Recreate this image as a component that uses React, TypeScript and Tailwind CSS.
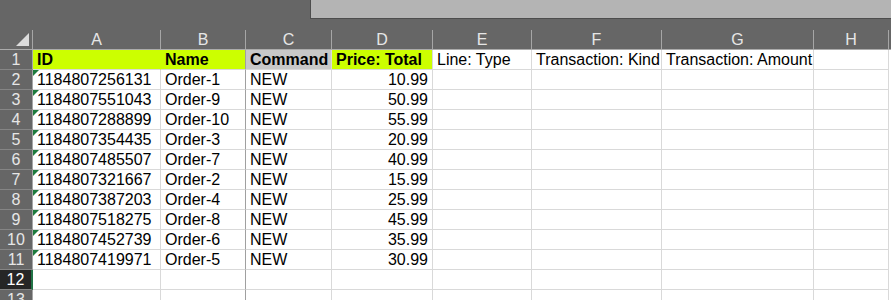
import React from "react";

const cols = [
    { key: "A", w: "w-[128px]" },
    { key: "B", w: "w-[85px]" },
    { key: "C", w: "w-[86px]" },
    { key: "D", w: "w-[101px]" },
    { key: "E", w: "w-[99px]" },
    { key: "F", w: "w-[130px]" },
    { key: "G", w: "w-[152px]" },
    { key: "H", w: "w-[75px]" },
];

const orders: [string, string, string][] = [
    ["1184807256131", "Order-1", "10.99"],
    ["1184807551043", "Order-9", "50.99"],
    ["1184807288899", "Order-10", "55.99"],
    ["1184807354435", "Order-3", "20.99"],
    ["1184807485507", "Order-7", "40.99"],
    ["1184807321667", "Order-2", "15.99"],
    ["1184807387203", "Order-4", "25.99"],
    ["1184807518275", "Order-8", "45.99"],
    ["1184807452739", "Order-6", "35.99"],
    ["1184807419971", "Order-5", "30.99"],
];

const RowHead = ({ n, active }: { n: number; active?: boolean }) => (
    <div
        className={`w-[33px] h-[20px] shrink-0 text-center leading-[20px] border-b border-[#858585] ${
            active ? "bg-[#262626] text-white border-r-2 border-r-[#217346]" : "bg-[#666666] text-[#e6e6e6] border-r border-r-[#a6a6a6]"
        }`}
    >
        {n}
    </div>
);

const Cell = ({
    w,
    children,
    className = "",
}: {
    w: string;
    children?: React.ReactNode;
    className?: string;
}) => (
    <div
        className={`${w} h-[20px] shrink-0 border-r border-b border-[#d9d9d9] px-[4px] leading-[20px] whitespace-nowrap overflow-hidden relative ${className}`}
    >
        {children}
    </div>
);

export default function App() {
    return (
        <div
            className="w-[891px] h-[300px] overflow-hidden bg-white text-[16px] text-black"
            style={{ fontFamily: "'Liberation Sans', Arial, sans-serif" }}
        >
            {/* top bar */}
            <div className="h-[30px] bg-[#666666] flex">
                <div className="w-[310px] shrink-0" />
                <div className="flex-1 h-[19px] bg-[#b4b4b4] border-l border-b border-[#4d4d4d]" />
            </div>

            {/* column letters */}
            <div className="flex h-[20px] bg-[#666666] border-b border-[#ababab]">
                <div className="w-[33px] shrink-0 border-r border-[#a6a6a6] relative">
                    <div className="absolute right-[3px] bottom-[3px] w-0 h-0 border-l-[13px] border-l-transparent border-b-[13px] border-b-[#dcdcdc]" />
                </div>
                {cols.map((c) => (
                    <div
                        key={c.key}
                        className={`${c.w} shrink-0 border-r border-[#a6a6a6] text-center text-[#e6e6e6] leading-[20px]`}
                    >
                        {c.key}
                    </div>
                ))}
            </div>

            {/* row 1 */}
            <div className="flex">
                <RowHead n={1} />
                <Cell w={cols[0].w} className="bg-[#ccff00] font-bold !border-r-[#ccff00]">ID</Cell>
                <Cell w={cols[1].w} className="bg-[#ccff00] font-bold !border-r-[#a0a0a0]">Name</Cell>
                <Cell w={cols[2].w} className="bg-[#c8c8c8] font-bold">Command</Cell>
                <Cell w={cols[3].w} className="bg-[#ccff00] font-bold">Price: Total</Cell>
                <Cell w={cols[4].w}>Line: Type</Cell>
                <Cell w={cols[5].w}>Transaction: Kind</Cell>
                <Cell w={cols[6].w}>Transaction: Amount</Cell>
                <Cell w={cols[7].w} />
            </div>

            {orders.map(([id, name, price], i) => (
                <div className="flex" key={id}>
                    <RowHead n={i + 2} />
                    <Cell w={cols[0].w}>
                        <div className="absolute left-0 top-0 w-0 h-0 border-t-[6px] border-t-[#1e7a3c] border-r-[6px] border-r-transparent" />
                        {id}
                    </Cell>
                    <Cell w={cols[1].w} className="!border-r-[#a0a0a0]">{name}</Cell>
                    <Cell w={cols[2].w}>NEW</Cell>
                    <Cell w={cols[3].w} className="text-right">{price}</Cell>
                    <Cell w={cols[4].w} />
                    <Cell w={cols[5].w} />
                    <Cell w={cols[6].w} />
                    <Cell w={cols[7].w} />
                </div>
            ))}

            {[12, 13].map((n) => (
                <div className="flex" key={n}>
                    <RowHead n={n} active={n === 12} />
                    {cols.map((c, j) => (
                        <Cell key={c.key} w={c.w} className={j === 1 ? "!border-r-[#a0a0a0]" : ""} />
                    ))}
                </div>
            ))}
        </div>
    );
}
